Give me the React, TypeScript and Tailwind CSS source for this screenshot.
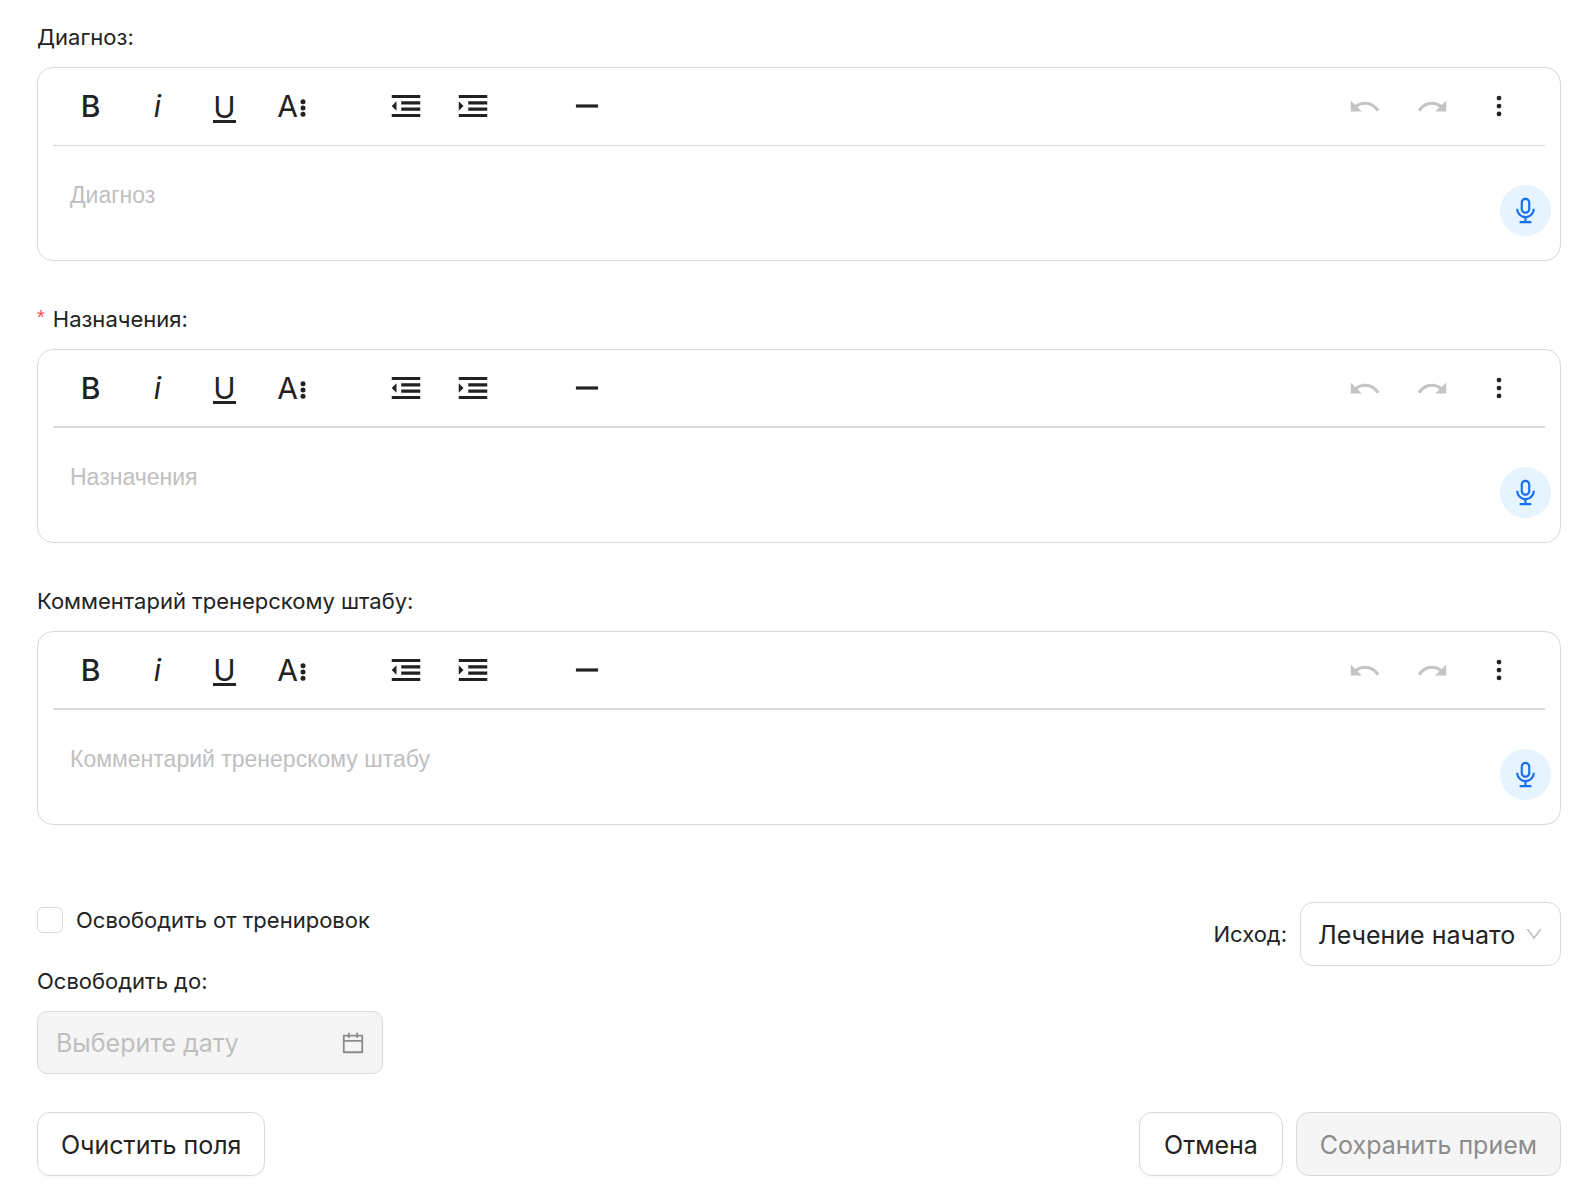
import React, { useState } from 'react';
import { AiOutlineAudio, AiOutlineCalendar, AiOutlineDown } from 'react-icons/ai';

type EditorFieldProps = {
  id: string;
  label: string;
  required?: boolean;
  toolbarClassName: string;
};

const editorFields: EditorFieldProps[] = [
  { id: 'diagnosis', label: 'Диагноз', toolbarClassName: 'border-b' },
  { id: 'prescriptions', label: 'Назначения', required: true, toolbarClassName: 'border-b-2' },
  { id: 'comment', label: 'Комментарий тренерскому штабу', toolbarClassName: 'border-b-2' },
];

function ToolIcon({ children }: { children: React.ReactNode }) {
  return (
    <svg className="size-[38px]" viewBox="0 0 24 24" fill="currentColor" aria-hidden="true">
      {children}
    </svg>
  );
}

function ToolButton({
  title,
  disabled,
  children,
}: {
  title: string;
  disabled?: boolean;
  children: React.ReactNode;
}) {
  return (
    <button
      type="button"
      aria-label={title}
      disabled={disabled}
      className="flex h-full w-[67px] shrink-0 items-center justify-center text-[30px] leading-none text-[#222222] disabled:text-[#c4c4c4]"
    >
      {children}
    </button>
  );
}

function Toolbar({ className }: { className: string }) {
  return (
    <div
      className={`mx-[15px] flex h-[78px] items-center justify-between border-[#d9d9d9] pr-[13px] pb-px pl-1 ${className}`}
    >
      <div className="flex h-full gap-[47px]">
        <div className="flex">
          <ToolButton title="Жирный">
            <span className="font-medium">B</span>
          </ToolButton>
          <ToolButton title="Курсив">
            <span className="italic">i</span>
          </ToolButton>
          <ToolButton title="Подчеркнутый">
            <span className="mt-1 flex h-[29px] w-[23px] items-center justify-center border-b-3 border-[#222222]">
              U
            </span>
          </ToolButton>
          <ToolButton title="Еще форматирование">
            <span className="flex items-center gap-[2px]">
              A
              <svg className="mt-1 h-[18px] w-[6px]" viewBox="0 0 6 18" fill="currentColor" aria-hidden="true">
                <circle cx="3" cy="2.7" r="2.5" />
                <circle cx="3" cy="9" r="2.5" />
                <circle cx="3" cy="15.3" r="2.5" />
              </svg>
            </span>
          </ToolButton>
        </div>
        <div className="flex">
          <ToolButton title="Уменьшить отступ">
            <ToolIcon>
              <path d="M3,12l3,3V9L3,12z M3,19h18v-2H3V19z M3,7h18V5H3V7z M9,11h12V9H9V11z M9,15h12v-2H9V15z" />
            </ToolIcon>
          </ToolButton>
          <ToolButton title="Увеличить отступ">
            <ToolIcon>
              <path d="M3,9v6l3-3L3,9z M3,19h18v-2H3V19z M3,7h18V5H3V7z M9,11h12V9H9V11z M9,15h12v-2H9V15z" />
            </ToolIcon>
          </ToolButton>
        </div>
        <ToolButton title="Горизонтальная линия">
          <ToolIcon>
            <path d="M5,11h14v2H5V11z" />
          </ToolIcon>
        </ToolButton>
      </div>
      <div className="flex h-full">
        <ToolButton title="Отменить" disabled>
          <ToolIcon>
            <path d="M10.4,9.4c-1.7,0.3-3.2,0.9-4.6,2L3,8.5v7h7l-2.7-2.7c3.7-2.6,8.8-1.8,11.5,1.9c0.2,0.3,0.4,0.5,0.5,0.8l1.8-0.9C18.9,10.8,14.7,8.7,10.4,9.4z" />
          </ToolIcon>
        </ToolButton>
        <ToolButton title="Повторить" disabled>
          <ToolIcon>
            <path d="M13.6,9.4c1.7,0.3,3.2,0.9,4.6,2L21,8.5v7h-7l2.7-2.7C13,10.1,7.9,11,5.3,14.7c-0.2,0.3-0.4,0.5-0.5,0.8L3,14.6C5.1,10.8,9.3,8.7,13.6,9.4z" />
          </ToolIcon>
        </ToolButton>
        <ToolButton title="Еще">
          <ToolIcon>
            <circle cx="12" cy="7" r="1.5" />
            <circle cx="12" cy="12" r="1.5" />
            <circle cx="12" cy="17" r="1.5" />
          </ToolIcon>
        </ToolButton>
      </div>
    </div>
  );
}

function EditorField({ id, label, required, toolbarClassName }: EditorFieldProps) {
  return (
    <div>
      <label htmlFor={id} className="mb-3 flex h-9 items-center text-[22px]">
        {required && (
          <span className="mr-2 h-8 font-['Liberation_Sans',sans-serif] text-[20px] leading-7 text-[#ff4d4f]">
            *
          </span>
        )}
        {label}:
      </label>
      <div className="rounded-2xl border border-[#d9d9d9]">
        <Toolbar className={toolbarClassName} />
        <div className="flex items-start">
          <textarea
            id={id}
            placeholder={label}
            className="h-[114px] min-w-0 flex-1 resize-none pt-[34px] pl-8 font-['Liberation_Sans',sans-serif] text-[23px] leading-[30px] outline-none placeholder:text-[#bfbfbf]"
          />
          <button
            type="button"
            aria-label="Голосовой ввод"
            className="mt-[39px] mr-[9px] flex size-[51px] shrink-0 items-center justify-center rounded-full bg-[#e6f4ff] text-[#1870f0]"
          >
            <AiOutlineAudio size={29} />
          </button>
        </div>
      </div>
    </div>
  );
}

export default function App() {
  const [released, setReleased] = useState(false);

  return (
    <form className="min-h-screen bg-white pt-[19px] pr-[29px] pb-6 pl-[37px] font-['Inter',sans-serif] text-[#222222]">
      <div className="flex flex-col gap-10">
        {editorFields.map((field) => (
          <EditorField key={field.id} {...field} />
        ))}
      </div>

      <div className="mt-[77px] flex items-start justify-between">
        <div>
          <label className="mt-1 flex h-[28px] items-center gap-[13px] text-[22px]">
            <input
              type="checkbox"
              checked={released}
              onChange={(e) => setReleased(e.target.checked)}
              className="size-[26px] appearance-none rounded-md border border-[#d9d9d9] checked:bg-[#1677ff]"
            />
            Освободить от тренировок
          </label>
          <label htmlFor="release-date" className="mt-[29px] mb-3 flex h-9 items-center text-[22px]">
            Освободить до:
          </label>
          <div className="flex h-[63px] w-[346px] items-center justify-between rounded-[10px] border border-[#d9d9d9] bg-[#f5f5f5] pr-4 pl-[18px]">
            <input
              id="release-date"
              type="text"
              disabled={!released}
              placeholder="Выберите дату"
              className="min-w-0 flex-1 pt-0.5 text-[25px] outline-none placeholder:text-[#bfbfbf]"
            />
            <AiOutlineCalendar size={26} className="shrink-0 text-[#8c8c8c]" />
          </div>
        </div>

        <div className="flex items-center gap-[13px]">
          <label htmlFor="outcome" className="text-[22px]">
            Исход:
          </label>
          <div className="relative">
            <select
              id="outcome"
              className="h-16 w-[261px] appearance-none rounded-[13px] border border-[#d9d9d9] bg-white pt-1 pr-10 pl-[17px] text-[25px] outline-none"
            >
              <option>Лечение начато</option>
            </select>
            <AiOutlineDown
              size={20}
              className="pointer-events-none absolute top-[22px] right-[17px] text-[#bfbfbf]"
            />
          </div>
        </div>
      </div>

      <div className="mt-[38px] flex gap-[13px] text-[25px]">
        <button
          type="reset"
          className="mr-auto h-16 rounded-[13px] border border-[#d9d9d9] px-[23px] pt-1 shadow-[0_3px_0_rgba(0,0,0,0.02)]"
        >
          Очистить поля
        </button>
        <button
          type="button"
          className="h-16 rounded-[13px] border border-[#d9d9d9] px-6 pt-1 shadow-[0_3px_0_rgba(0,0,0,0.02)]"
        >
          Отмена
        </button>
        <button
          type="submit"
          disabled
          className="h-16 rounded-[13px] border border-[#d9d9d9] bg-[#f5f5f5] px-[23px] pt-1 text-[#8c8c8c]"
        >
          Сохранить прием
        </button>
      </div>
    </form>
  );
}
